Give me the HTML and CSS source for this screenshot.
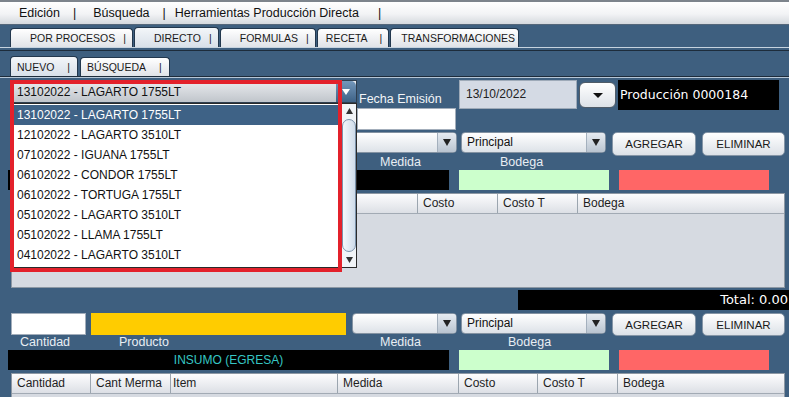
FILE: index.html
```html
<!DOCTYPE html>
<html lang="es">
<head>
  <meta charset="UTF-8">
  <title>Producción Directa</title>
  <link rel="stylesheet" href="styles.css">
</head>
<body>
  <div class="menubar">
    <span class="menu menu-first">Edición</span><span class="menu-pipe">|</span>
    <span class="menu">Búsqueda</span><span class="menu-pipe">|</span>
    <span class="menu menu-tools">Herramientas Producción Directa</span><span class="menu-pipe menu-pipe-last">|</span>
  </div>

  <div class="tab-strip">
    <div class="tab">POR PROCESOS<span class="pipe">|</span></div>
    <div class="tab active">DIRECTO<span class="pipe">|</span></div>
    <div class="tab">FORMULAS<span class="pipe">|</span></div>
    <div class="tab compact">RECETA<span class="pipe wide">|</span></div>
    <div class="tab compact last">TRANSFORMACIONES</div>
  </div>

  <div class="panel">
    <div class="tab-strip sub">
      <div class="tab active">NUEVO<span class="pipe">|</span></div>
      <div class="tab">BÚSQUEDA<span class="pipe">|</span></div>
    </div>

    <div class="content">
      <!-- cabecera: receta / fecha / numero -->
      <div class="row row-head">
        <div class="combo-wrap">
          <div class="combo-open">
            <span class="combo-text">13102022 - LAGARTO 1755LT</span>
            <span class="combo-open-btn">
              <svg width="8" height="6" viewBox="0 0 8 6"><path d="M0 0h8L4 6z" fill="#fff"/></svg>
            </span>
          </div>
          <div class="popup">
            <div class="popup-list">
              <div class="popup-item selected">13102022 - LAGARTO 1755LT</div>
              <div class="popup-item">12102022 - LAGARTO 3510LT</div>
              <div class="popup-item">07102022 - IGUANA 1755LT</div>
              <div class="popup-item">06102022 - CONDOR 1755LT</div>
              <div class="popup-item">06102022 - TORTUGA 1755LT</div>
              <div class="popup-item">05102022 - LAGARTO 3510LT</div>
              <div class="popup-item">05102022 - LLAMA 1755LT</div>
              <div class="popup-item">04102022 - LAGARTO 3510LT</div>
            </div>
            <div class="scrollbar">
              <span class="scroll-arrow">
                <svg width="7" height="6" viewBox="0 0 7 6"><path d="M0 6h7L3.5 0z" fill="#333"/></svg>
              </span>
              <span class="scroll-thumb"></span>
              <span class="scroll-arrow">
                <svg width="7" height="6" viewBox="0 0 7 6"><path d="M0 0h7L3.5 6z" fill="#333"/></svg>
              </span>
            </div>
          </div>
          <div class="highlight"></div>
        </div>

        <div class="fecha">
          <span class="fecha-label">Fecha Emisión</span>
          <div class="field field-fecha"></div>
        </div>
        <div class="date-field">13/10/2022</div>
        <button class="date-btn">
          <svg width="10" height="5" viewBox="0 0 10 5"><path d="M0 0h10L5 5z" fill="#111"/></svg>
        </button>
        <div class="doc-number">Producción 0000184</div>
      </div>

      <!-- producto (ingresa) -->
      <div class="row row-entry">
        <div class="field field-qty"></div>
        <div class="field field-product"></div>
        <div class="combo combo-medida">
          <span class="combo-text"></span>
          <span class="combo-btn"><svg width="8" height="7" viewBox="0 0 8 7"><path d="M0 0h8L4 7z" fill="#222"/></svg></span>
        </div>
        <div class="combo combo-bodega">
          <span class="combo-text">Principal</span>
          <span class="combo-btn"><svg width="8" height="7" viewBox="0 0 8 7"><path d="M0 0h8L4 7z" fill="#222"/></svg></span>
        </div>
        <button class="btn btn-add">AGREGAR</button>
        <button class="btn btn-del">ELIMINAR</button>
      </div>
      <div class="row row-labels">
        <span class="lbl lbl-qty"></span>
        <span class="lbl lbl-product"></span>
        <span class="lbl lbl-medida">Medida</span>
        <span class="lbl lbl-bodega">Bodega</span>
      </div>
      <div class="row row-status">
        <div class="status-title"></div>
        <div class="status-ok"></div>
        <div class="status-err"></div>
      </div>

      <div class="grid-table table-top">
        <div class="thead">
          <span class="th"></span>
          <span class="th"></span>
          <span class="th"></span>
          <span class="th"></span>
          <span class="th">Costo</span>
          <span class="th">Costo T</span>
          <span class="th">Bodega</span>
        </div>
      </div>

      <div class="total-row">
        <div class="total">Total: 0.00</div>
      </div>

      <!-- insumo (egresa) -->
      <div class="row row-entry row-entry-low">
        <div class="field field-qty"></div>
        <div class="field field-product"></div>
        <div class="combo combo-medida">
          <span class="combo-text"></span>
          <span class="combo-btn"><svg width="8" height="7" viewBox="0 0 8 7"><path d="M0 0h8L4 7z" fill="#222"/></svg></span>
        </div>
        <div class="combo combo-bodega">
          <span class="combo-text">Principal</span>
          <span class="combo-btn"><svg width="8" height="7" viewBox="0 0 8 7"><path d="M0 0h8L4 7z" fill="#222"/></svg></span>
        </div>
        <button class="btn btn-add">AGREGAR</button>
        <button class="btn btn-del">ELIMINAR</button>
      </div>
      <div class="row row-labels">
        <span class="lbl lbl-qty">Cantidad</span>
        <span class="lbl lbl-product">Producto</span>
        <span class="lbl lbl-medida">Medida</span>
        <span class="lbl lbl-bodega lbl-bodega-low">Bodega</span>
      </div>
      <div class="row row-status">
        <div class="status-title">INSUMO (EGRESA)</div>
        <div class="status-ok"></div>
        <div class="status-err"></div>
      </div>

      <div class="grid-table table-low">
        <div class="thead">
          <span class="th">Cantidad</span>
          <span class="th">Cant Merma</span>
          <span class="th th-item">Item</span>
          <span class="th">Medida</span>
          <span class="th">Costo</span>
          <span class="th">Costo T</span>
          <span class="th">Bodega</span>
        </div>
      </div>
    </div>
  </div>
</body>
</html>
```

FILE: styles.css
```css
* {
  box-sizing: border-box;
}

body {
  margin: 0;
  width: 789px;
  height: 397px;
  overflow: hidden;
  font-family: "Liberation Sans", Arial, sans-serif;
  background: #3e5f7f;
}

button {
  font-family: inherit;
  padding: 0;
}

/* menu */
.menubar {
  height: 25px;
  border-top: 2px solid #7d848c;
  border-bottom: 1px solid #55677a;
  background: linear-gradient(#ffffff, #f2f3f5 55%, #d5d9de);
  display: flex;
  align-items: center;
  font-size: 12.5px;
  color: #111;
}

.menu {
  margin-left: 17px;
}

.menu-first {
  margin-left: 19px;
}

.menu-tools {
  margin-left: 9px;
}

.menu-pipe {
  margin-left: 13px;
}

.menu-pipe-last {
  margin-left: 19px;
}

/* tabs */
.tab-strip {
  display: flex;
  align-items: flex-end;
  gap: 1px;
  height: 22px;
  padding-left: 10px;
}

.tab {
  height: 19px;
  padding: 0 6px 0 19px;
  border: 1px solid #22374d;
  border-bottom: none;
  border-radius: 4px 4px 0 0;
  background: linear-gradient(#ffffff, #e0e3e8);
  display: flex;
  align-items: center;
  font-size: 10.5px;
  color: #1a1a1a;
}

.tab.active {
  height: 20px;
  background: linear-gradient(#f3f6f9, #d8e0e9);
}

.tab.compact {
  padding-left: 8px;
}

.tab.last {
  padding: 0 3px 0 10px;
}

.pipe {
  margin-left: 8px;
}

.pipe.wide {
  margin-left: 12px;
}

.panel {
  border-top: 1px solid #c6d3df;
}

.tab-strip.sub {
  margin-top: 2px;
  height: 27px;
  border-top: 1px solid #1d2c3b;
  border-bottom: 1px solid #1d2c3b;
  gap: 2px;
}

.tab-strip.sub .tab {
  padding: 0 7px 0 6px;
}

.tab-strip.sub .pipe {
  margin-left: 13px;
}

.content {
  border-top: 1px solid #b7c7d7;
  padding: 2px 0 0 11px;
}

.row {
  display: flex;
  align-items: flex-start;
}

/* header row */
.row-head {
  height: 50px;
}

.combo-wrap {
  position: relative;
  width: 346px;
  height: 23px;
}

.combo-open {
  display: flex;
  height: 23px;
  border: 1px solid #2e3e4f;
  background: linear-gradient(#e9ebee, #c0c5cb);
  font-size: 12px;
  color: #111;
}

.combo-open .combo-text {
  flex: 1;
  padding: 2px 0 0 5px;
  line-height: 19px;
}

.combo-open-btn {
  width: 20px;
  border-radius: 0 5px 0 0;
  background: linear-gradient(#7397bb, #3e6286);
  display: flex;
  align-items: center;
  justify-content: center;
}

.popup {
  position: absolute;
  left: 0;
  top: 23px;
  width: 346px;
  height: 165px;
  border: 1px solid #2a2a2a;
  background: #fff;
  display: flex;
  z-index: 5;
}

.popup-list {
  flex: 1;
  padding-top: 1px;
}

.popup-item {
  height: 20px;
  line-height: 20px;
  padding-left: 5px;
  font-size: 12px;
  color: #111;
}

.popup-item.selected {
  background: #3e6286;
  color: #fff;
}

.scrollbar {
  width: 15px;
  border-left: 1px solid #c3ccd6;
  background: #f1f4f7;
  display: flex;
  flex-direction: column;
}

.scroll-arrow {
  height: 14px;
  display: flex;
  align-items: center;
  justify-content: center;
}

.scroll-thumb {
  flex: 1;
  margin: 1px 0 1px;
  border: 1px solid #7b92aa;
  border-radius: 7px;
  background: linear-gradient(90deg, #f4f8fb, #cfdcea);
}

.highlight {
  position: absolute;
  left: -1px;
  top: 0;
  width: 332px;
  height: 192px;
  border: 4px solid #e3212b;
  z-index: 6;
  pointer-events: none;
}

.fecha {
  width: 99px;
  padding-top: 11px;
}

.fecha-label {
  display: block;
  height: 17px;
  padding-left: 2px;
  font-size: 12.5px;
  line-height: 17px;
  color: #f2f5f8;
}

.field {
  background: #fff;
  border: 1px solid #a3aebb;
}

.field-fecha {
  height: 22px;
}

.date-field {
  margin-left: 3px;
  width: 118px;
  height: 29px;
  padding: 6px 0 0 6px;
  background: #d4dae4;
  border: 1px solid #9eaab8;
  font-size: 12px;
  color: #222;
}

.date-btn {
  margin: 2px 0 0 2px;
  width: 37px;
  height: 26px;
  border: 1px solid #505c68;
  border-radius: 6px;
  background: linear-gradient(#ffffff, #dde2e8);
  display: flex;
  align-items: center;
  justify-content: center;
}

.doc-number {
  margin-left: 2px;
  width: 161px;
  height: 30px;
  padding-left: 2px;
  line-height: 30px;
  background: #000;
  color: #fff;
  font-family: "DejaVu Sans", sans-serif;
  font-size: 12.5px;
}

/* entry rows */
.row-entry {
  margin-top: 2px;
  height: 23px;
}

.row-entry-low {
  margin-top: 3px;
  height: 22px;
}

.field-qty {
  width: 75px;
  height: 22px;
}

.field-product {
  margin-left: 5px;
  width: 255px;
  height: 22px;
  border: none;
  background: #ffcc00;
}

.combo {
  height: 21px;
  display: flex;
  border: 1px solid #8392a2;
  border-radius: 4px;
  background: linear-gradient(#ffffff, #dde2e8);
  font-size: 12px;
  color: #111;
}

.combo .combo-text {
  flex: 1;
  padding-left: 5px;
  line-height: 19px;
}

.combo-btn {
  width: 19px;
  border-left: 1px solid #a4b0bd;
  border-radius: 0 3px 3px 0;
  background: linear-gradient(#e6ebf1, #b9c4d0);
  display: flex;
  align-items: center;
  justify-content: center;
}

.combo-medida {
  margin-left: 6px;
  width: 105px;
}

.combo-bodega {
  margin-left: 4px;
  width: 145px;
}

.btn {
  margin-left: 6px;
  height: 24px;
  border: 1px solid #8595a6;
  border-radius: 5px;
  background: linear-gradient(#ffffff, #dce1e7);
  font-size: 11.5px;
  color: #1a1a1a;
}

.btn-add {
  width: 84px;
}

.btn-del {
  width: 83px;
}

.row-entry-low .btn {
  height: 23px;
}

.row-labels {
  height: 15px;
  font-size: 12.5px;
  line-height: 15px;
  color: #e9eef3;
}

.lbl-qty {
  width: 80px;
  padding-left: 9px;
}

.lbl-product {
  width: 261px;
  padding-left: 28px;
}

.lbl-medida {
  width: 109px;
  padding-left: 28px;
}

.lbl-bodega {
  padding-left: 39px;
}

.lbl-bodega-low {
  padding-left: 47px;
}

.row-status {
  height: 20px;
}

.status-title {
  margin-left: -3px;
  width: 441px;
  height: 20px;
  background: #000;
  color: #36c6c4;
  font-size: 12px;
  line-height: 20px;
  text-align: center;
}

.status-ok {
  margin-left: 10px;
  width: 150px;
  height: 20px;
  background: #ccffcc;
}

.status-err {
  margin-left: 10px;
  width: 150px;
  height: 20px;
  background: #ff6666;
}

/* tables */
.grid-table {
  margin-top: 3px;
  width: 774px;
  border: 1px solid #8d98a4;
  background: #d6dae1;
}

.table-top {
  height: 95px;
}

.table-low {
  height: 40px;
}

.thead {
  display: grid;
  height: 20px;
  background: linear-gradient(#fdfdfe, #dcdfe5);
  border-bottom: 1px solid #a2aab4;
}

.table-top .thead {
  grid-template-columns: 79px 80px 127px 120px 80px 80px 1fr;
}

.table-low .thead {
  grid-template-columns: 79px 80px 167px 121px 79px 80px 1fr;
}

.th {
  border-right: 1px solid #9ba5af;
  padding-left: 5px;
  font-size: 12px;
  line-height: 19px;
  color: #1e1e1e;
  white-space: nowrap;
  overflow: hidden;
}

.th:last-child {
  border-right: none;
}

.th-item {
  padding-left: 2px;
}

.total-row {
  margin-top: 2px;
  display: flex;
  justify-content: flex-end;
}

.total {
  width: 271px;
  height: 20px;
  padding-right: 1px;
  background: #000;
  color: #fff;
  font-family: "DejaVu Sans", sans-serif;
  font-size: 13px;
  line-height: 20px;
  text-align: right;
}
```
